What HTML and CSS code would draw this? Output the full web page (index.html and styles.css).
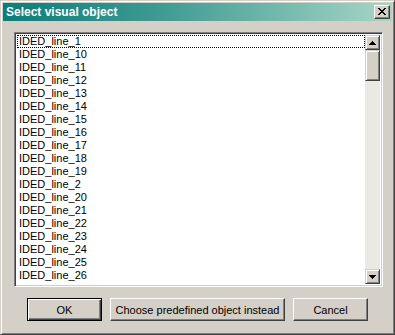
FILE: index.html
```html
<!DOCTYPE html>
<html>
<head>
<meta charset="utf-8">
<link rel="stylesheet" href="styles.css">
</head>
<body>
<div class="window">
  <div class="titlebar">
    <span class="title">Select visual object</span>
    <div class="close">
      <svg width="8" height="7" viewBox="0 0 8 7"><path d="M0 0h2v1h1v1h2v-1h1v-1h2v1h-1v1h-1v1h-1v1h1v1h1v1h1v1h-2v-1h-1v-1h-2v1h-1v1h-2v-1h1v-1h1v-1h1v-1h-1v-1h-1v-1h-1z" fill="#000"/></svg>
    </div>
  </div>
  <div class="client">
    <div class="listbox">
      <div class="items">
        <div class="item focus">IDED_line_1</div>
        <div class="item">IDED_line_10</div>
        <div class="item">IDED_line_11</div>
        <div class="item">IDED_line_12</div>
        <div class="item">IDED_line_13</div>
        <div class="item">IDED_line_14</div>
        <div class="item">IDED_line_15</div>
        <div class="item">IDED_line_16</div>
        <div class="item">IDED_line_17</div>
        <div class="item">IDED_line_18</div>
        <div class="item">IDED_line_19</div>
        <div class="item">IDED_line_2</div>
        <div class="item">IDED_line_20</div>
        <div class="item">IDED_line_21</div>
        <div class="item">IDED_line_22</div>
        <div class="item">IDED_line_23</div>
        <div class="item">IDED_line_24</div>
        <div class="item">IDED_line_25</div>
        <div class="item">IDED_line_26</div>
        <div class="item">IDED_line_27</div>
      </div>
      <div class="scrollbar">
        <div class="sbtn"><svg width="7" height="4" viewBox="0 0 7 4"><path d="M3 0h1v1h1v1h1v1h1v1h-7v-1h1v-1h1v-1h1z" fill="#000"/></svg></div>
        <div class="thumb"></div>
        <div class="track"></div>
        <div class="sbtn"><svg width="7" height="4" viewBox="0 0 7 4"><path d="M0 0h7v1h-1v1h-1v1h-1v1h-1v-1h-1v-1h-1v-1h-1z" fill="#000"/></svg></div>
      </div>
    </div>
    <div class="buttons">
      <div class="btn default"><span>OK</span></div>
      <div class="btn wide"><span>Choose predefined object instead</span></div>
      <div class="btn"><span>Cancel</span></div>
    </div>
  </div>
</div>
</body>
</html>
```
FILE: styles.css
```css
* { box-sizing: border-box; }
html, body { margin: 0; padding: 0; }
body {
  background: #d4d0c8;
  font-family: "Liberation Sans", Arial, sans-serif;
  font-size: 11px;
}
.window {
  width: 395px;
  height: 335px;
  background: #d4d0c8;
  border: 1px solid;
  border-color: #d4d0c8 #404040 #404040 #d4d0c8;
  box-shadow: inset 1px 1px 0 #fff, inset -1px -1px 0 #808080;
  padding: 2px;
  display: flex;
  flex-direction: column;
}
.titlebar {
  height: 18px;
  background: linear-gradient(to right, #0c7c7b 0%, #3e9a92 40%, #a6d6c6 100%);
  display: flex;
  align-items: center;
  justify-content: space-between;
  padding: 0 2px 0 3px;
}
.title {
  color: #fff;
  font-weight: bold;
  font-size: 12px;
}
.close {
  width: 16px;
  height: 14px;
  background: #d4d0c8;
  border: 1px solid;
  border-color: #fff #404040 #404040 #fff;
  box-shadow: inset -1px -1px 0 #808080;
  display: flex;
  align-items: center;
  justify-content: center;
  padding: 0 1px 1px 0;
}
.client {
  flex: 1;
  display: flex;
  flex-direction: column;
  padding: 11px 9px 10px 11px;
  gap: 11px;
}
.listbox {
  height: 255px;
  display: flex;
  border: 1px solid;
  border-color: #808080 #fff #fff #808080;
  box-shadow: inset 1px 1px 0 #404040, inset -1px -1px 0 #d4d0c8;
  padding: 2px;
  background: #fff;
}
.items {
  flex: 1;
  overflow: hidden;
  color: #000;
}
.item {
  height: 13px;
  line-height: 13px;
  padding-left: 2px;
  white-space: nowrap;
}
.item.focus {
  border: 1px dotted #000;
  line-height: 11px;
  padding-left: 1px;
}
.scrollbar {
  width: 15px;
  display: flex;
  flex-direction: column;
  background: #ebe9e4;
}
.sbtn, .thumb {
  background: #d4d0c8;
  border: 1px solid;
  border-color: #d4d0c8 #404040 #404040 #d4d0c8;
  box-shadow: inset 1px 1px 0 #fff, inset -1px -1px 0 #808080;
}
.sbtn {
  height: 15px;
  display: flex;
  align-items: center;
  justify-content: center;
}
.thumb { height: 31px; }
.track { flex: 1; }
.buttons {
  display: flex;
  justify-content: center;
  gap: 8px;
  margin-right: 2px;
}
.btn {
  width: 75px;
  height: 23px;
  background: #d4d0c8;
  border: 1px solid;
  border-color: #fff #404040 #404040 #fff;
  box-shadow: inset -1px -1px 0 #808080;
  display: flex;
  align-items: center;
  justify-content: center;
  color: #000;
  font-size: 11px;
}
.btn.wide { width: 175px; }
.btn.default {
  border: 1px solid #000;
  box-shadow: inset 1px 1px 0 #fff, inset -1px -1px 0 #404040, inset -2px -2px 0 #808080;
}
```
